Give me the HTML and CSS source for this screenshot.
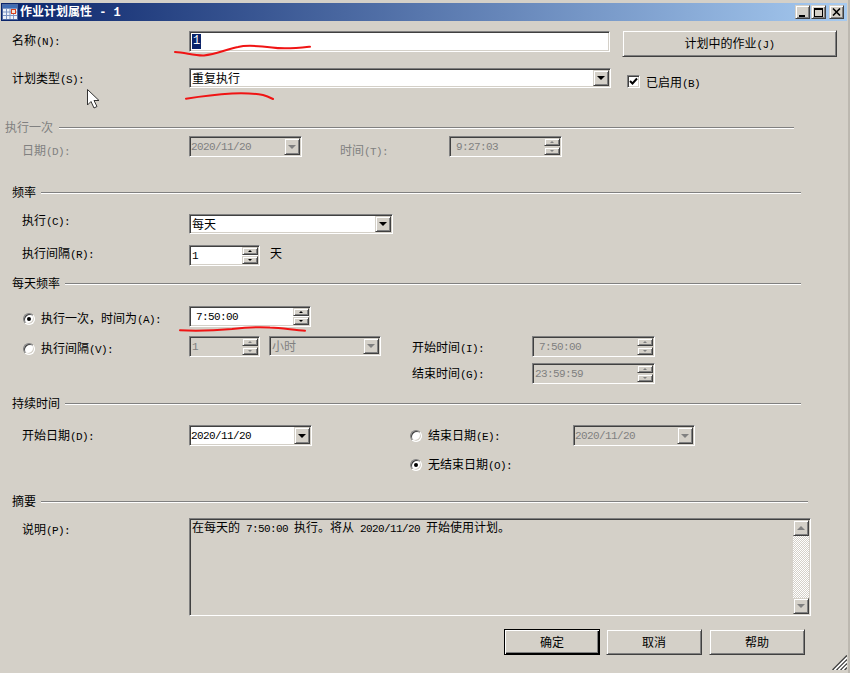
FILE: index.html
```html
<!DOCTYPE html>
<html lang="zh">
<head>
<meta charset="utf-8">
<title>作业计划属性 - 1</title>
<link rel="stylesheet" href="styles.css">
</head>
<body>
<div class="window">
  <header class="titlebar">
    <svg class="app-icon" width="16" height="16" viewBox="0 0 16 16">
      <rect x="0.5" y="0.5" width="15" height="15" fill="#eef2f8" stroke="#4f6aa3"/>
      <rect x="1" y="1" width="14" height="3" fill="#3f6db5"/>
      <path d="M4.500 4V15M8 4V15M11.500 4V15M1 4.500H15M1 8H15M1 11.500H15" stroke="#7f96c4" fill="none"/>
      <rect x="9.500" y="5.500" width="4" height="4" fill="#f6e6d8" stroke="#d9431f"/>
    </svg>
    <span class="title-text">作业计划属性<span class="title-num"> - 1</span></span>
    <div class="caption-btns">
      <button class="cap raised"><i class="cap-min"></i></button>
      <button class="cap raised"><i class="cap-max"></i></button>
      <button class="cap cap-gap raised">
        <svg width="9" height="8" viewBox="0 0 9 8"><path d="M1 0.500L8 7.500M8 0.500L1 7.500" stroke="#000" stroke-width="1.600" fill="none"/></svg>
      </button>
    </div>
  </header>

  <main class="content">
    <div class="row r-name">
      <label class="lab-top">名称<span class="m">(N):</span></label>
      <div class="field w-name mt1"><span class="sel m12">1</span></div>
      <button class="btn raised jobs-btn">计划中的作业<span class="m">(J)</span></button>
    </div>
    <div class="row r-type">
      <label class="lab-top">计划类型<span class="m">(S):</span></label>
      <div class="field combo w-type"><span class="val pad">重复执行</span><span class="drop raised"><i class="arrow"></i></span></div>
      <span class="check"><svg width="9" height="9" viewBox="0 0 9 9"><path d="M1 4L3.500 6.500L8 1.500" stroke="#000" stroke-width="2" fill="none"/></svg></span>
      <label class="check-lab">已启用<span class="m">(B)</span></label>
    </div>

    <div class="head head-once off"><span>执行一次</span><i class="rule"></i></div>
    <div class="row r-once off">
      <label class="lab lab-low">日期<span class="m">(D):</span></label>
      <div class="field w-date1"><span class="val m">2020/11/20</span><span class="drop raised"><i class="arrow arrow-off"></i></span></div>
      <label class="lab-time lab-low">时间<span class="m">(T):</span></label>
      <div class="field w-time"><span class="val m pad-time">9:27:03</span><span class="spin"><span class="raised"><i class="up up-off"></i></span><span class="raised"><i class="down down-off"></i></span></span></div>
    </div>

    <div class="head"><span>频率</span><i class="rule"></i></div>
    <div class="row r-exec">
      <label class="lab lab-high">执行<span class="m">(C):</span></label>
      <div class="field combo w-exec"><span class="val pad">每天</span><span class="drop raised"><i class="arrow"></i></span></div>
    </div>
    <div class="row r-interval">
      <label class="lab lab-high2">执行间隔<span class="m">(R):</span></label>
      <div class="field w-spin"><span class="val m pad">1</span><span class="spin"><span class="raised"><i class="up"></i></span><span class="raised"><i class="down"></i></span></span></div>
      <span class="unit lab-high2">天</span>
    </div>

    <div class="head"><span>每天频率</span><i class="rule"></i></div>
    <div class="row r-a">
      <div class="radio-cell lab-low2"><span class="radio on"></span><label>执行一次，时间为<span class="m">(A):</span></label></div>
      <div class="field w-time2"><span class="val m pad-time">7:50:00</span><span class="spin"><span class="raised"><i class="up"></i></span><span class="raised"><i class="down"></i></span></span></div>
    </div>
    <div class="row r-b">
      <div class="radio-cell lab-low2"><span class="radio"></span><label>执行间隔<span class="m">(V):</span></label></div>
      <div class="field w-spin off"><span class="val m pad">1</span><span class="spin"><span class="raised"><i class="up up-off"></i></span><span class="raised"><i class="down down-off"></i></span></span></div>
      <div class="field combo w-unit off"><span class="val pad">小时</span><span class="drop raised"><i class="arrow arrow-off"></i></span></div>
      <label class="lab-range lab-range-b">开始时间<span class="m">(I):</span></label>
      <div class="field w-time3 off"><span class="val m pad-time">7:50:00</span><span class="spin"><span class="raised"><i class="up up-off"></i></span><span class="raised"><i class="down down-off"></i></span></span></div>
    </div>
    <div class="row r-c">
      <label class="lab-range lab-range-solo">结束时间<span class="m">(G):</span></label>
      <div class="field w-time3 off"><span class="val m pad-tight">23:59:59</span><span class="spin"><span class="raised"><i class="up up-off"></i></span><span class="raised"><i class="down down-off"></i></span></span></div>
    </div>

    <div class="head"><span>持续时间</span><i class="rule"></i></div>
    <div class="row r-start">
      <label class="lab">开始日期<span class="m">(D):</span></label>
      <div class="field w-date2"><span class="val m">2020/11/20</span><span class="drop raised"><i class="arrow"></i></span></div>
      <div class="radio-cell2"><span class="radio"></span><label>结束日期<span class="m">(E):</span></label></div>
      <div class="field w-date3 off"><span class="val m">2020/11/20</span><span class="drop raised"><i class="arrow arrow-off"></i></span></div>
    </div>
    <div class="row r-noend">
      <div class="radio-cell2 solo"><span class="radio on"></span><label>无结束日期<span class="m">(O):</span></label></div>
    </div>

    <div class="head head-wide"><span>摘要</span><i class="rule"></i></div>
    <div class="row r-desc">
      <label class="lab lab-desc">说明<span class="m">(P):</span></label>
      <div class="field memo">
        <p class="memo-text">在每天的<span class="m"> 7:50:00 </span>执行。将从<span class="m"> 2020/11/20 </span>开始使用计划。</p>
        <div class="scrollbar">
          <span class="sb-btn raised"><i class="arrow-up-off"></i></span>
          <span class="sb-track"></span>
          <span class="sb-btn raised"><i class="arrow arrow-off"></i></span>
        </div>
      </div>
    </div>
    <div class="actions">
      <button class="btn raised action default">确定</button>
      <button class="btn raised action">取消</button>
      <button class="btn raised action action-last">帮助</button>
    </div>
  </main>

  <svg class="grip" width="15" height="15" viewBox="0 0 15 15">
    <g fill="none" stroke-width="1.500">
      <path d="M15 0.500L0.500 15M15 4.500L4.500 15M15 8.500L8.500 15M15 12.500L12.500 15" stroke="#404040"/>
      <path d="M15 2.500L2.500 15M15 6.500L6.500 15M15 10.500L10.500 15" stroke="#fff"/>
    </g>
  </svg>

  <svg class="ink" width="850" height="673" viewBox="0 0 850 673">
    <g fill="none" stroke="#f01414" stroke-width="2" stroke-linecap="round" stroke-linejoin="round">
      <path d="M175 52C185 52.500 195 56 204 55.500C215 54.500 228 49 238 47C248 44.500 260 46 272 47.500C285 49.500 298 48 310 46.700"/>
      <path d="M186 98.700C200 96.500 215 94.500 232 93.500C245 93 255 93.500 263 95C267 96 270 97.500 273 99"/>
      <path d="M180 330.300C195 331 215 330.500 232 329C245 327.500 258 326.500 270 327.500C282 328 294 330 305 330.700"/>
    </g>
    <path d="M87.500 89.500V105L91 101.500L94 108L97 106.500L94 100.500H99Z" fill="#fff" stroke="#333"/>
  </svg>
</div>
</body>
</html>
```
FILE: styles.css
```css
* { box-sizing: border-box; }
html, body { margin: 0; padding: 0; }
body {
  width: 850px;
  height: 673px;
  overflow: hidden;
  background: #d4d0c8;
  font: 12px/16px "Noto Sans CJK SC", sans-serif;
  color: #000;
}
i { display: block; }
button { font: inherit; color: inherit; padding: 0; }
label { display: block; }

.window {
  position: relative;
  width: 850px;
  height: 673px;
  padding-top: 3px;
  background: #d4d0c8;
}

.m {
  font-family: "Liberation Mono", monospace;
  font-size: 11px;
  letter-spacing: -0.6px;
  white-space: pre;
}
.m12 { font-family: "Liberation Mono", monospace; font-size: 12px; }

/* Title bar */
.titlebar {
  display: flex;
  align-items: center;
  height: 18px;
  margin: 0 3px 0 1px;
  padding-left: 1px;
  background: linear-gradient(90deg, #0a246a, #a6caf0);
  color: #fff;
  font-weight: 700;
}
.app-icon { flex: none; }
.title-text { margin-left: 2px; white-space: pre; }
.title-num { font-family: "Liberation Mono", monospace; font-size: 12px; font-weight: 700; }
.caption-btns { display: flex; gap: 1px; margin-left: auto; margin-right: 3px; }
.cap {
  display: flex;
  align-items: center;
  justify-content: center;
  width: 15px;
  height: 14px;
}
.cap-gap { margin-left: 2px; }
.cap-min { width: 6px; height: 2px; margin-top: 7px; margin-right: 2px; background: #000; }
.cap-max { width: 9px; height: 9px; border: 1px solid #000; border-top-width: 2px; }

/* Shared bevels */
.raised {
  background: #d4d0c8;
  border: 1px solid;
  border-color: #d4d0c8 #404040 #404040 #d4d0c8;
  box-shadow: inset 1px 1px #fff, inset -1px -1px #808080;
}
.field {
  display: flex;
  align-items: center;
  flex: none;
  height: 21px;
  padding: 1px;
  background: #fff;
  border: 1px solid;
  border-color: #808080 #fff #fff #808080;
  box-shadow: inset 1px 1px #404040, inset -1px -1px #d4d0c8;
}
.combo { height: 20px; }
.off { color: #808080; }
.field.off { background: #d4d0c8; }
.off .field { background: #d4d0c8; }
.val { flex: 1; white-space: pre; }
.pad { padding-left: 1px; }
.pad-time { padding-left: 5px; }
.pad-tight { padding-left: 1px; }

.drop {
  display: flex;
  align-items: center;
  justify-content: center;
  flex: none;
  width: 16px;
  align-self: stretch;
}
.arrow { width: 0; height: 0; border: solid transparent; border-width: 4px 4px 0; border-top-color: #000; }
.arrow-off { border-top-color: #808080; }
.arrow-up-off { width: 0; height: 0; border: solid transparent; border-width: 0 4px 4px; border-bottom-color: #808080; }

.spin { display: flex; flex-direction: column; gap: 1px; flex: none; width: 16px; }
.spin > span { display: flex; align-items: center; justify-content: center; height: 8px; }
.up { width: 0; height: 0; border: solid transparent; border-width: 0 2px 2px; border-bottom-color: #000; }
.down { width: 0; height: 0; border: solid transparent; border-width: 2px 2px 0; border-top-color: #000; }
.up-off { border-bottom-color: #808080; }
.down-off { border-top-color: #808080; }

/* Rows */
.content { display: flex; flex-direction: column; padding-top: 9px; }
.row { display: flex; align-items: flex-start; flex: none; }
.row label { line-height: 20px; }
.r-name { height: 38px; }
.r-type { height: 52px; }
.r-once { height: 49px; }
.r-exec { height: 44px; padding-top: 13px; }
.r-interval { height: 31px; }
.r-a { height: 44px; padding-top: 14px; }
.r-b { height: 27px; }
.r-c { height: 33px; }
.r-start { height: 41px; padding-top: 13px; }
.r-noend { height: 41px; padding-top: 1px; }
.r-desc { height: 119px; padding-top: 8px; }

.lab-top { flex: none; width: 177px; margin-left: 12px; }
.lab { flex: none; width: 167px; margin-left: 22px; }
.lab-low { margin-top: 4px; }
.lab-high { margin-top: -4px; }
.lab-high2 { margin-top: -2px; }
.lab-desc { margin-top: 1px; }
.lab-low2 { margin-top: 2px; }
.lab-time { flex: none; width: 109px; margin-left: 38px; }
.lab-range { flex: none; width: 120px; margin-left: 31px; }
.lab-range-b { margin-top: 1px; }
.lab-range-solo { margin-left: 412px; }

.mt1 { margin-top: 1px; }
.w-name { width: 421px; padding-left: 2px; }
.w-type { width: 422px; }
.w-exec { width: 204px; }
.w-date1 { width: 113px; }
.w-date2 { width: 123px; }
.w-date3 { width: 122px; }
.w-time { width: 113px; }
.w-time2 { width: 122px; }
.w-time3 { width: 123px; }
.w-spin { width: 71px; }
.w-unit { width: 112px; margin-left: 9px; height: 20px; }

.sel { background: #0a246a; color: #fff; padding: 0 1px; line-height: 15px; }
.jobs-btn { width: 215px; height: 27px; margin-left: 12px; }
.btn { display: block; text-align: center; cursor: default; }
.check {
  display: flex;
  align-items: center;
  justify-content: center;
  flex: none;
  width: 13px;
  height: 13px;
  margin: 7px 0 0 16px;
  background: #fff;
  border: 1px solid;
  border-color: #808080 #fff #fff #808080;
  box-shadow: inset 1px 1px #404040, inset -1px -1px #d4d0c8;
}
.check-lab { margin: 4px 0 0 6px; }
.unit { margin-left: 10px; line-height: 20px; }

/* Group headers */
.head {
  display: flex;
  align-items: center;
  gap: 5px;
  flex: none;
  width: 789px;
  height: 16px;
  margin-left: 12px;
}
.head span { flex: none; margin-top: -2px; }
.head-once { width: 789px; margin-left: 5px; gap: 6px; }
.head-wide { width: 796px; }
.rule { flex: 1; height: 2px; border-top: 1px solid #808080; border-bottom: 1px solid #fff; }

/* Radio */
.radio-cell { display: flex; align-items: center; gap: 6px; flex: none; width: 166px; margin-left: 23px; }
.radio-cell label, .radio-cell2 label { white-space: nowrap; }
.radio-cell2 { display: flex; align-items: center; gap: 6px; flex: none; width: 163px; margin-left: 98px; }
.radio-cell2.solo { margin-left: 410px; }
.radio {
  display: flex;
  align-items: center;
  justify-content: center;
  flex: none;
  width: 12px;
  height: 12px;
  border-radius: 50%;
  background: #fff;
  border: 1px solid;
  border-color: #808080 #fff #fff #808080;
  box-shadow: inset 1px 1px #404040, inset -1px -1px #d4d0c8;
}
.radio.on::after { content: ""; width: 4px; height: 4px; border-radius: 50%; background: #000; }

/* Description */
.memo {
  align-items: stretch;
  width: 622px;
  height: 98px;
  padding-left: 2px;
  background: #d4d0c8;
}
.memo-text { flex: 1; margin: -1px 0 0; white-space: pre; }
.scrollbar { display: flex; flex-direction: column; flex: none; width: 16px; }
.sb-btn { display: flex; align-items: center; justify-content: center; flex: none; height: 16px; }
.sb-track {
  flex: 1;
  background: conic-gradient(#fff 25%, #d4d0c8 0 50%, #fff 0 75%, #d4d0c8 0) 0 0 / 2px 2px;
}

/* Buttons */
.actions { display: flex; gap: 6px; margin-left: 504px; }
.action { width: 96px; height: 26px; }
.action-last { margin-left: 1px; }
.default { outline: 1px solid #000; outline-offset: -1px; box-shadow: inset 1px 1px #fff, inset -1px -1px #000, inset -2px -2px #808080; }

/* Overlays */
.grip { position: absolute; right: 3px; bottom: 3px; }
.ink { position: absolute; left: 0; top: 0; pointer-events: none; }
.window::after {
  content: "";
  position: absolute;
  top: 0;
  right: 0;
  bottom: 0;
  width: 2px;
  background: #bcb8b0;
}
```
